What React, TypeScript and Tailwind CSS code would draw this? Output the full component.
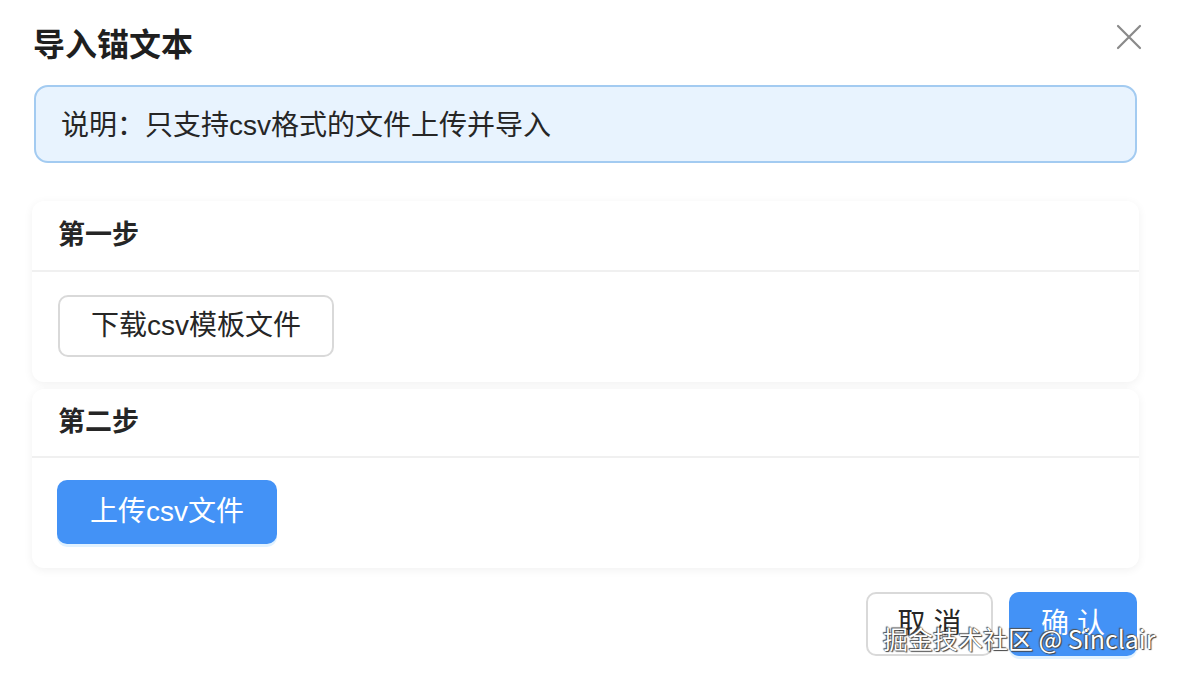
import React from "react";

const font = { fontFamily: '"Liberation Sans", "Noto Sans CJK SC", sans-serif' };

export default function App() {
  return (
    <div className="relative w-[1178px] h-[676px] bg-white overflow-hidden text-[#262626]" style={font}>
      <div className="pl-[34px] pr-[41px] pt-[25px]">
        <div className="flex items-start justify-between h-[60px]">
          <h1 className="text-[32px] leading-[38px] font-bold text-[#1f1f1f] mt-[1px] -ml-[1px]">导入锚文本</h1>
          <svg width="26" height="26" viewBox="0 0 26 26" className="mt-[-1px] mr-[-5px]">
            <path d="M2 2 L24 24 M24 2 L2 24" stroke="#8a8a8a" strokeWidth="2.2" strokeLinecap="round" />
          </svg>
        </div>
        <div className="h-[78px] rounded-[14px] border-2 border-[#a3cbf1] bg-[#e8f3fe] flex items-center px-[25px] pt-[3px] text-[28px] text-[#262626]">
          说明：只支持csv格式的文件上传并导入
        </div>
        <div className="mt-[38px] -mx-[2px] flex flex-col gap-[7px]">
          <div className="rounded-[12px] bg-white shadow-[0_2px_10px_rgba(0,0,0,0.06)]">
            <div className="h-[71px] flex items-center px-[26px] text-[27px] font-bold border-b-2 border-[#f0f0f0]">第一步</div>
            <div className="px-[26px] pt-[23px] pb-[25px]">
              <button className="h-[62px] px-[31px] rounded-[10px] border-2 border-[#d9d9d9] bg-white text-[28px] text-[#262626]">
                下载csv模板文件
              </button>
            </div>
          </div>
          <div className="rounded-[12px] bg-white shadow-[0_2px_10px_rgba(0,0,0,0.06)]">
            <div className="h-[69px] flex items-center px-[26px] text-[27px] font-bold border-b-2 border-[#f0f0f0]">第二步</div>
            <div className="px-[25px] pt-[22px] pb-[24px]">
              <button className="h-[64px] px-[33px] rounded-[10px] bg-[#4392f6] text-white text-[28px] shadow-[0_3px_0_rgba(5,145,255,0.12)]">
                上传csv文件
              </button>
            </div>
          </div>
        </div>
        <div className="mt-[24px] flex justify-end gap-[16px]">
          <button className="w-[127px] h-[64px] rounded-[10px] border-2 border-[#d9d9d9] bg-white text-[28px] text-[#262626]">
            取 消
          </button>
          <button className="w-[128px] h-[64px] rounded-[10px] bg-[#4392f6] text-white text-[28px] shadow-[0_3px_0_rgba(5,145,255,0.12)]">
            确 认
          </button>
        </div>
      </div>
      <div
        className="absolute left-[883px] top-[621px] text-[25px] leading-[34px] text-white whitespace-nowrap"
        style={{ fontFamily: '"Noto Sans CJK SC", "Noto Sans", sans-serif', textShadow: "0 0 1px #333, 1px 1px 1px #444, -1px -1px 1px #555" }}
      >
        掘金技术社区 @ Sinclair
      </div>
    </div>
  );
}
